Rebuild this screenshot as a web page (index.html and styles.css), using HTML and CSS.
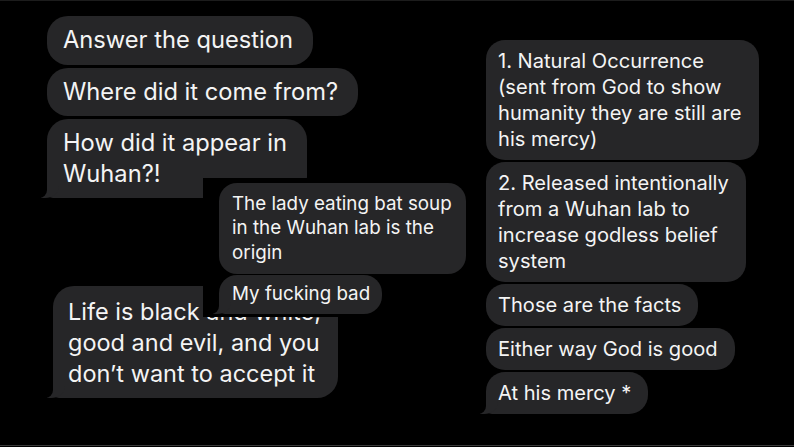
FILE: index.html
```html
<!DOCTYPE html>
<html lang="en">
<head>
<meta charset="utf-8">
<title>Messages</title>
<link rel="stylesheet" href="styles.css">
</head>
<body>
<div class="page">
  <div class="col col-left">
    <div class="thread">
      <p class="bubble lg">Answer the question</p>
      <p class="bubble lg">Where did it come from?</p>
      <p class="bubble lg tail">How did it appear in<br>Wuhan?!</p>
    </div>
    <p class="bubble xl tail life">Life is black and white,<br>good and evil, and you<br>don’t want to accept it</p>
  </div>
  <div class="col col-right">
    <p class="bubble rt">1. Natural Occurrence<br>(sent from God to show<br>humanity they are still are<br>his mercy)</p>
    <p class="bubble rt">2. Released intentionally<br>from a Wuhan lab to<br>increase godless belief<br>system</p>
    <p class="bubble rt">Those are the facts</p>
    <p class="bubble rt">Either way God is good</p>
    <p class="bubble rt tail">At his mercy *</p>
  </div>
  <div class="clip">
    <p class="bubble md">The lady eating bat soup<br>in the Wuhan lab is the<br>origin</p>
    <p class="bubble md tail">My fucking bad</p>
  </div>
</div>
</body>
</html>
```

FILE: styles.css
```css
* { box-sizing: border-box; }
html, body {
  margin: 0;
  padding: 0;
  background: #000;
}
body {
  width: 794px;
  height: 447px;
  overflow: hidden;
  font-family: Inter, "Liberation Sans", Arial, sans-serif;
  color: #f4f4f4;
}
.page {
  position: relative;
  height: 446px;
  display: grid;
  grid-template-columns: 486px 1fr;
  border-top: 1px solid #1c1c1c;
  border-bottom: 1px solid #3a3a3a;
}
.col {
  display: flex;
  flex-direction: column;
  align-items: flex-start;
}
.col-left {
  padding: 15px 0 0 47px;
}
.thread {
  display: flex;
  flex-direction: column;
  align-items: flex-start;
  gap: 3px;
}
.col-right {
  padding-top: 39px;
  gap: 2px;
}
.bubble {
  position: relative;
  margin: 0;
  background: #262628;
  border-radius: 21px;
  white-space: nowrap;
}
.lg {
  font-size: 23.7px;
  line-height: 30.5px;
  padding: 9px 20px 9px 16px;
}
.xl {
  font-size: 23.5px;
  line-height: 31px;
  padding: 9.5px 17px 9.5px 15px;
}
.life {
  margin-top: 88px;
  margin-left: 6px;
}
.rt {
  font-size: 20.1px;
  line-height: 26px;
  padding: 8px 17px 8px 12px;
  border-radius: 19px;
}
.md {
  font-size: 18.8px;
  line-height: 24.5px;
  padding: 8.5px 14px 8.5px 13px;
  border-radius: 18px;
}
.md.tail {
  padding-top: 7.5px;
  padding-bottom: 7.5px;
  padding-right: 12px;
}
.clip {
  position: absolute;
  left: 203px;
  top: 177px;
  width: 276px;
  height: 139px;
  background: #000;
  padding: 5px 0 0 16px;
  display: flex;
  flex-direction: column;
  align-items: flex-start;
  gap: 1px;
}
.tail {
  border-bottom-left-radius: 6px;
}
.tail::before {
  content: "";
  position: absolute;
  left: -6px;
  bottom: 0;
  width: 18px;
  height: 16px;
  background: #262628;
  border-bottom-right-radius: 14px 12px;
}
.tail::after {
  content: "";
  position: absolute;
  left: -10px;
  bottom: 0;
  width: 10px;
  height: 16px;
  background: #000;
  border-bottom-right-radius: 8px;
}
```
